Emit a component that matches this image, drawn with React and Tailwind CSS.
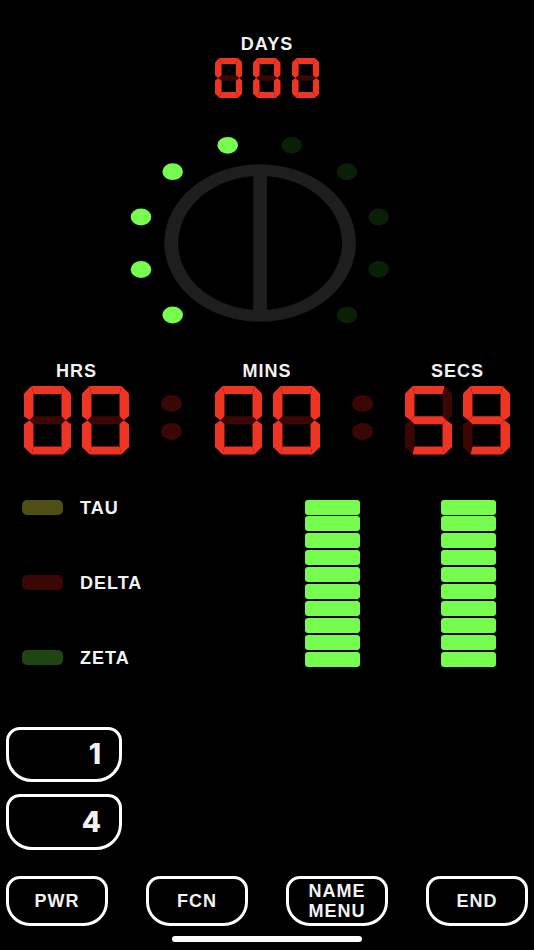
import React from 'react';

// --- 7 SEGMENT DIGIT ---
const W = 47;
const H = 68.5;
const MID = 34.25;
const CUT = 7.5;
const TIP = 5.5;

// sx = width of the upright strokes, sy = height of the bars, hg = half height of the middle bar
const buildSegments = (sx, sy, hg) => ({
  a: `${CUT},0 ${W - CUT},0 ${W - sx},${sy} ${sx},${sy}`,
  b: `${W - CUT},0 ${W},${CUT} ${W},${MID - hg} ${W - TIP},${MID} ${W - sx},${MID - hg} ${W - sx},${sy}`,
  c: `${W - TIP},${MID} ${W},${MID + hg} ${W},${H - CUT} ${W - CUT},${H} ${W - sx},${H - sy} ${W - sx},${MID + hg}`,
  d: `${sx},${H - sy} ${W - sx},${H - sy} ${W - CUT},${H} ${CUT},${H}`,
  e: `0,${MID + hg} ${TIP},${MID} ${sx},${MID + hg} ${sx},${H - sy} ${CUT},${H} 0,${H - CUT}`,
  f: `${CUT},0 ${sx},${sy} ${sx},${MID - hg} ${TIP},${MID} 0,${MID - hg} 0,${CUT}`,
  g: `${TIP},${MID} ${sx},${MID - hg} ${W - sx},${MID - hg} ${W - TIP},${MID} ${W - sx},${MID + hg} ${sx},${MID + hg}`,
});

const LARGE = buildSegments(9.5, 8, 3.9);
const SMALL = buildSegments(11.3, 10.3, 4.5);

const DIGITS = {
  0: 'abcdef',
  5: 'acdfg',
  9: 'abcdfg',
};

const Digit = ({ value, segments, className }) => {
  const names = Object.keys(segments);
  const lit = DIGITS[value];
  return (
    <svg viewBox="0 0 47 68.5" className={className}>
      {names.filter((n) => !lit.includes(n)).map((n) => (
        <polygon key={n} points={segments[n]} className="fill-[#3a0705]" />
      ))}
      {names.filter((n) => lit.includes(n)).map((n) => (
        <polygon key={n} points={segments[n]} className="fill-[#ee3524]" />
      ))}
    </svg>
  );
};

const Label = ({ children }) => (
  <span className="font-['Liberation_Sans',sans-serif] text-[18px] font-bold leading-[20px] tracking-[1px] text-[#f2f2f2]">
    {children}
  </span>
);

const TimeGroup = ({ label, value }) => (
  <div className="flex w-[105px] flex-col items-center">
    <Label>{label}</Label>
    <div className="mt-[5px] flex w-full justify-between">
      <Digit value={value[0]} segments={LARGE} className="h-[68.5px] w-[47px]" />
      <Digit value={value[1]} segments={LARGE} className="h-[68.5px] w-[47px]" />
    </div>
  </div>
);

const Colon = () => (
  <div className="flex w-[21px] flex-col gap-[11px] pt-[34px]">
    <div className="h-[17px] w-[21px] rounded-[50%] bg-[#3a0705]" />
    <div className="h-[17px] w-[21px] rounded-[50%] bg-[#3a0705]" />
  </div>
);

// --- DIAL ---
const LEDS = [
  [11, 81, true],
  [11, 133.5, true],
  [42.7, 35.7, true],
  [42.7, 179, true],
  [97.7, 9.3, true],
  [161.7, 9.3, false],
  [217, 35.7, false],
  [248.7, 81, false],
  [248.7, 133.3, false],
  [217, 179, false],
];

const Dial = () => (
  <svg viewBox="0 0 260 190" className="ml-[130px] mt-[38px] h-[190px] w-[260px]">
    <path
      fillRule="evenodd"
      className="fill-[#1e1e1e]"
      d="M34.3 107a95.8 78.7 0 1 0 191.6 0a95.8 78.7 0 1 0 -191.6 0ZM48.2 107a81.9 67 0 1 1 163.8 0a81.9 67 0 1 1 -163.8 0Z"
    />
    <rect x="123.3" y="32" width="13.7" height="150" className="fill-[#1e1e1e]" />
    {LEDS.map(([cx, cy, on]) => (
      <ellipse
        key={`${cx}-${cy}`}
        cx={cx}
        cy={cy}
        rx="10.3"
        ry="8.4"
        className={on ? 'fill-[#76fb4f]' : 'fill-[#0a2005]'}
      />
    ))}
  </svg>
);

const Indicator = ({ label, color }) => (
  <div className="flex h-[15px] items-center">
    <div className={`h-[15px] w-[41px] rounded-[5px] ${color}`} />
    <span className="ml-[17px] translate-y-[1px]">
      <Label>{label}</Label>
    </span>
  </div>
);

const Meter = () => (
  <div className="flex w-[55px] flex-col gap-[1.9px]">
    {Array.from({ length: 10 }).map((_, i) => (
      <div key={i} className="h-[15px] rounded-[3px] bg-[#76fb4f]" />
    ))}
  </div>
);

const NumberKey = ({ value }) => (
  <div className="flex h-[55.5px] w-[116px] items-center justify-end rounded-t-[14px] rounded-b-[26px] border-[3px] border-white pr-[18px] text-[28px] font-extrabold text-[#f2f2f2]">
    {value}
  </div>
);

const SoftKey = ({ children }) => (
  <div className="flex h-[50px] w-[102px] items-center justify-center rounded-t-[14px] rounded-b-[24px] border-[3px] border-white text-center leading-[20px]">
    <Label>{children}</Label>
  </div>
);

export default function App() {
  return (
    <div className="h-[950px] w-[534px] overflow-hidden bg-black pt-[34px] font-['Inter',sans-serif]">
      {/* Days */}
      <div className="flex flex-col items-center">
        <Label>DAYS</Label>
        <div className="mt-[4px] flex gap-[10.8px]">
          <Digit value="0" segments={SMALL} className="h-[40px] w-[27.5px]" />
          <Digit value="0" segments={SMALL} className="h-[40px] w-[27.5px]" />
          <Digit value="0" segments={SMALL} className="h-[40px] w-[27.5px]" />
        </div>
      </div>

      <Dial />

      {/* Clock */}
      <div className="mt-[35px] flex justify-between px-[24px]">
        <TimeGroup label="HRS" value="00" />
        <Colon />
        <TimeGroup label="MINS" value="00" />
        <Colon />
        <TimeGroup label="SECS" value="59" />
      </div>

      {/* Status and meters */}
      <div className="mt-[45px] flex h-[167px] justify-between pl-[22px] pr-[38px]">
        <div className="flex flex-col gap-[60px]">
          <Indicator label="TAU" color="bg-[#4f4f15]" />
          <Indicator label="DELTA" color="bg-[#3a0705]" />
          <Indicator label="ZETA" color="bg-[#1f4514]" />
        </div>
        <div className="flex gap-[81px]">
          <Meter />
          <Meter />
        </div>
      </div>

      {/* Keys */}
      <div className="mt-[60px] flex flex-col gap-[12px] pl-[6px]">
        <NumberKey value="1" />
        <NumberKey value="4" />
      </div>

      <div className="mt-[26px] flex justify-between px-[6px]">
        <SoftKey>PWR</SoftKey>
        <SoftKey>FCN</SoftKey>
        <SoftKey>NAME<br />MENU</SoftKey>
        <SoftKey>END</SoftKey>
      </div>

      <div className="ml-[172px] mt-[10px] h-[6px] w-[190px] rounded-full bg-white" />
    </div>
  );
}
